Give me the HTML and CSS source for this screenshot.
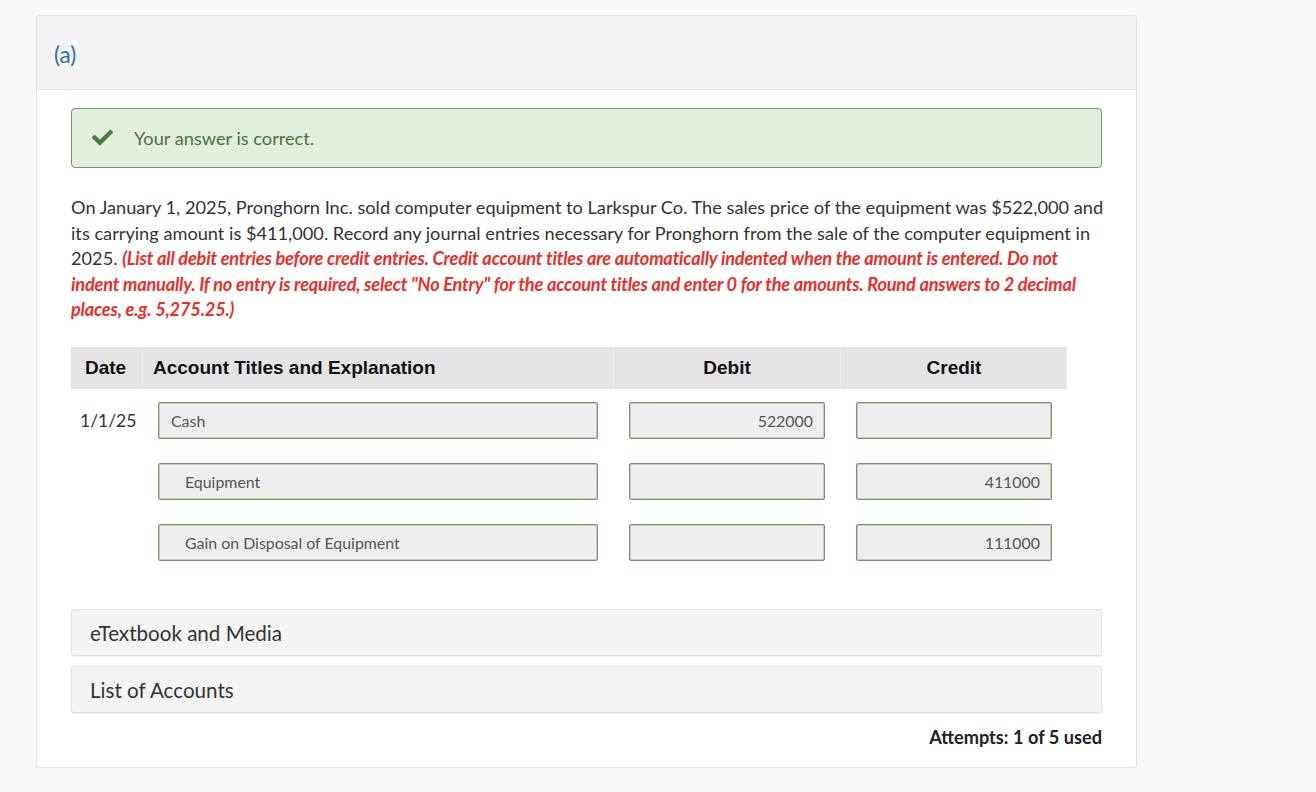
FILE: index.html
```html
<!DOCTYPE html>
<html lang="en">
  <head>
    <meta charset="UTF-8" />
    <meta name="viewport" content="width=device-width, initial-scale=1.0" />
    <title>Question (a)</title>
    <link rel="stylesheet" href="styles.css">
  </head>
  <body>
    <div class="question-card">
      <div class="question-header">(a)</div>
      <div class="question-body">
        <div class="answer-status">
          <svg class="check-icon" viewBox="0 0 512 512" aria-hidden="true">
            <path d="M173.9 439.4l-166.4-166.4c-10-10-10-26.2 0-36.2l36.2-36.2c10-10 26.2-10 36.2 0L192 312.7 432.1 72.6c10-10 26.2-10 36.2 0l36.2 36.2c10 10 10 26.2 0 36.2l-294.4 294.4c-10 10-26.2 10-36.2 0z" />
          </svg>
          <span>Your answer is correct.</span>
        </div>

        <p class="question-text">
          On January 1, 2025, Pronghorn Inc. sold computer equipment to Larkspur Co. The sales price of the equipment was $522,000 and its carrying amount is $411,000. Record any journal entries necessary for Pronghorn from the sale of the computer equipment in 2025.
          <em class="instructions">(List all debit entries before credit entries. Credit account titles are automatically indented when the amount is entered. Do not indent manually. If no entry is required, select "No Entry" for the account titles and enter 0 for the amounts. Round answers to 2 decimal places, e.g. 5,275.25.)</em>
        </p>

        <div class="journal">
          <div class="journal-head">
            <div class="head-cell head-date">Date</div>
            <div class="head-cell">Account Titles and Explanation</div>
            <div class="head-cell head-center">Debit</div>
            <div class="head-cell head-center">Credit</div>
          </div>

          <div class="journal-row">
            <div class="cell-date">1/1/25</div>
            <div class="cell"><div class="field">Cash</div></div>
            <div class="cell"><div class="field field-num">522000</div></div>
            <div class="cell"><div class="field field-num"></div></div>
          </div>
          <div class="journal-row">
            <div class="cell-date"></div>
            <div class="cell"><div class="field field-indent">Equipment</div></div>
            <div class="cell"><div class="field field-num"></div></div>
            <div class="cell"><div class="field field-num">411000</div></div>
          </div>
          <div class="journal-row">
            <div class="cell-date"></div>
            <div class="cell"><div class="field field-indent">Gain on Disposal of Equipment</div></div>
            <div class="cell"><div class="field field-num"></div></div>
            <div class="cell"><div class="field field-num">111000</div></div>
          </div>
        </div>

        <div class="resources">
          <div class="resource-panel">eTextbook and Media</div>
          <div class="resource-panel">List of Accounts</div>
        </div>

        <div class="attempts">Attempts: 1 of 5 used</div>
      </div>
    </div>
  </body>
</html>
```

FILE: styles.css
```css
body {
  margin: 0;
  background: #fafafa;
  font-family: Lato, "Open Sans", sans-serif;
  color: #333;
}
.question-card {
  width: 1099px;
  margin: 15px 0 0 36px;
  background: #fff;
  border: 1px solid #e4e4e4;
  border-radius: 3px;
  box-shadow: 0 1px 2px rgba(0, 0, 0, 0.05);
}
.question-header {
  height: 73px;
  line-height: 78px;
  padding-left: 17px;
  background: #f4f4f4;
  border-bottom: 1px solid #e2e2e2;
  color: #2f6fab;
  font-size: 22.5px;
}
.question-body {
  padding: 18px 34px 19px 34px;
}
.answer-status {
  display: flex;
  align-items: center;
  height: 58px;
  padding-left: 20px;
  background: #e2efdc;
  border: 1px solid #71996a;
  border-radius: 4px;
  color: #4a7440;
  font-size: 18.2px;
}
.check-icon {
  width: 21px;
  height: 21px;
  fill: #477a3c;
  margin: -2px 21px 0 0;
}
.question-text {
  margin: 27px -3px 0 0;
  font-size: 18.2px;
  line-height: 25.6px;
}
.instructions {
  color: #e8302a;
  font-weight: 700;
  letter-spacing: -0.2px;
}
.journal {
  display: flex;
  flex-direction: column;
  gap: 24px;
  width: 996px;
  margin-top: 24px;
}
.journal-head,
.journal-row {
  display: grid;
  grid-template-columns: 71px 471px 227px 227px;
}
.journal-head {
  height: 42px;
  margin-bottom: -11px;
  background: #e4e4e4;
}
.head-cell {
  display: flex;
  align-items: center;
  padding-left: 10px;
  border-left: 1px solid #eeeeee;
  color: #111;
  font-family: "Liberation Sans", Arial, sans-serif;
  font-weight: 700;
  font-size: 19px;
}
.head-date {
  padding-left: 14px;
  border-left: none;
}
.head-center {
  justify-content: center;
  padding-left: 0;
}
.cell-date {
  display: flex;
  align-items: center;
  padding-left: 9px;
  font-size: 17.5px;
  color: #333;
}
.cell {
  padding: 0 15px 0 16px;
}
.field {
  height: 35px;
  line-height: 36px;
  padding: 0 12px;
  background: #eeeeee;
  border: 1px solid #6f9a64;
  box-shadow: inset 0 0 0 0.5px #8fb287;
  border-radius: 2px;
  font-size: 15.9px;
  color: #555;
  white-space: nowrap;
}
.field-indent {
  padding-left: 26px;
}
.field-num {
  text-align: right;
  padding-right: 11px;
}
.resources {
  display: flex;
  flex-direction: column;
  gap: 10px;
  margin-top: 48px;
}
.resource-panel {
  height: 45px;
  line-height: 47px;
  padding-left: 18px;
  background: #f4f4f4;
  border: 1px solid #e2e2e2;
  border-radius: 3px;
  box-shadow: 0 1px 1px rgba(0, 0, 0, 0.06);
  font-size: 20.6px;
  color: #333;
}
.attempts {
  margin-top: 13px;
  text-align: right;
  font-size: 18.2px;
  font-weight: 700;
  color: #222;
}
```
